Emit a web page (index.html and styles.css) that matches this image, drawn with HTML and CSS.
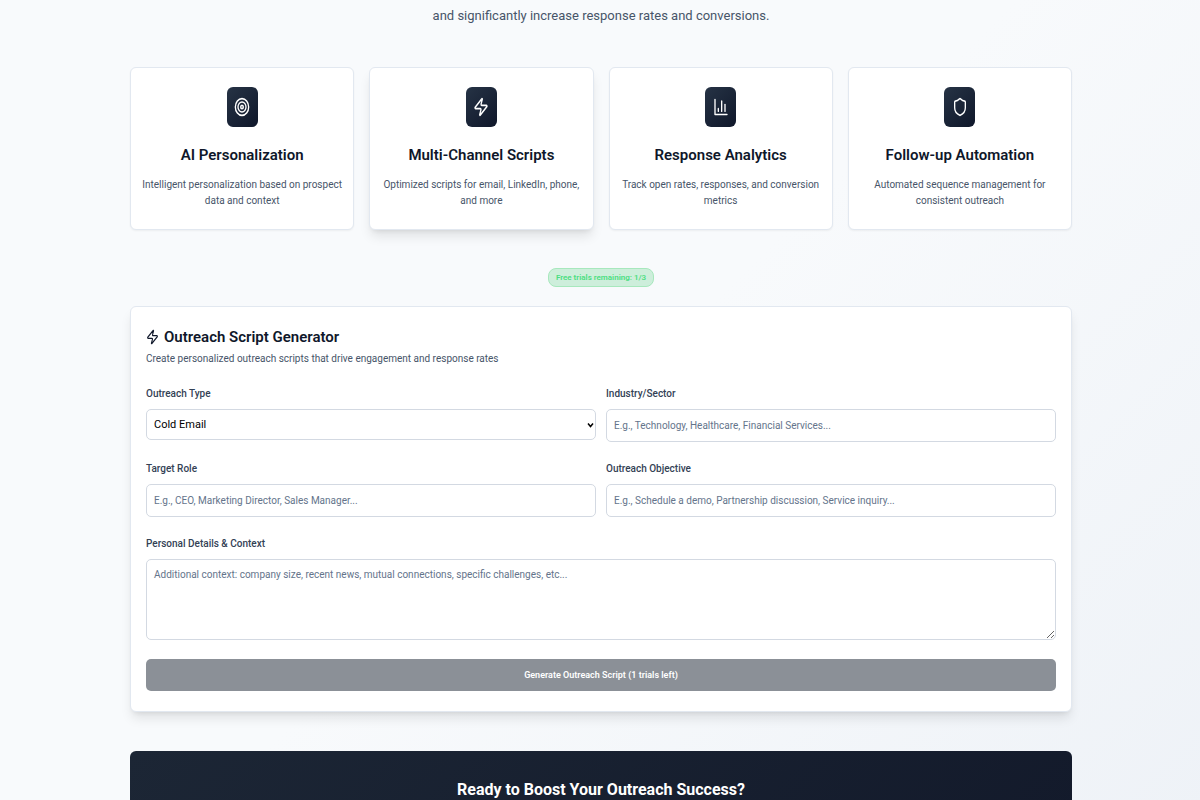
FILE: index.html
```html
<!DOCTYPE html>
<html lang="en">
<head>
    <meta charset="UTF-8">
    <meta name="viewport" content="width=device-width, initial-scale=1.0">
    <title>Outreach Script Generator</title>
    <link rel="stylesheet" href="styles.css">
</head>
<body>
    <main class="container">
        <p class="intro">and significantly increase response rates and conversions.</p>

        <section class="features">
            <article class="card feature">
                <div class="feature-icon">
                    <svg viewBox="0 0 24 24" preserveAspectRatio="none"><circle cx="12" cy="12" r="10"/><circle cx="12" cy="12" r="6"/><circle cx="12" cy="12" r="2"/></svg>
                </div>
                <h3>AI Personalization</h3>
                <p>Intelligent personalization based on prospect data and context</p>
            </article>
            <article class="card feature raised">
                <div class="feature-icon">
                    <svg viewBox="0 0 24 24" preserveAspectRatio="none"><path d="M4 14a1 1 0 0 1-.78-1.63l9.9-10.2a.5.5 0 0 1 .86.46l-1.92 6.02A1 1 0 0 0 13 10h7a1 1 0 0 1 .78 1.63l-9.9 10.2a.5.5 0 0 1-.86-.46l1.92-6.02A1 1 0 0 0 11 14z"/></svg>
                </div>
                <h3>Multi-Channel Scripts</h3>
                <p>Optimized scripts for email, LinkedIn, phone, and more</p>
            </article>
            <article class="card feature">
                <div class="feature-icon">
                    <svg viewBox="0 0 24 24" preserveAspectRatio="none"><path d="M3 3v18h18"/><path d="M18 17V9"/><path d="M13 17V5"/><path d="M8 17v-3"/></svg>
                </div>
                <h3>Response Analytics</h3>
                <p>Track open rates, responses, and conversion metrics</p>
            </article>
            <article class="card feature">
                <div class="feature-icon">
                    <svg viewBox="0 0 24 24" preserveAspectRatio="none"><path d="M20 13c0 5-3.5 7.5-7.66 8.95a1 1 0 0 1-.67-.01C7.5 20.5 4 18 4 13V6a1 1 0 0 1 1-1c2 0 4.5-1.2 6.24-2.72a1.17 1.17 0 0 1 1.52 0C14.51 3.81 17 5 19 5a1 1 0 0 1 1 1z"/></svg>
                </div>
                <h3>Follow-up Automation</h3>
                <p>Automated sequence management for consistent outreach</p>
            </article>
        </section>

        <div class="trials">
            <span class="badge">Free trials remaining: 1/3</span>
        </div>

        <section class="card raised generator">
            <h2>
                <svg viewBox="0 0 24 24" preserveAspectRatio="none"><path d="M4 14a1 1 0 0 1-.78-1.63l9.9-10.2a.5.5 0 0 1 .86.46l-1.92 6.02A1 1 0 0 0 13 10h7a1 1 0 0 1 .78 1.63l-9.9 10.2a.5.5 0 0 1-.86-.46l1.92-6.02A1 1 0 0 0 11 14z"/></svg>
                Outreach Script Generator
            </h2>
            <p class="subtitle">Create personalized outreach scripts that drive engagement and response rates</p>

            <form class="form">
                <div class="field">
                    <label for="outreach-type">Outreach Type</label>
                    <select id="outreach-type">
                        <option selected>Cold Email</option>
                    </select>
                </div>
                <div class="field">
                    <label for="industry">Industry/Sector</label>
                    <input type="text" id="industry" placeholder="E.g., Technology, Healthcare, Financial Services...">
                </div>
                <div class="field">
                    <label for="target-role">Target Role</label>
                    <input type="text" id="target-role" placeholder="E.g., CEO, Marketing Director, Sales Manager...">
                </div>
                <div class="field">
                    <label for="objective">Outreach Objective</label>
                    <input type="text" id="objective" placeholder="E.g., Schedule a demo, Partnership discussion, Service inquiry...">
                </div>
                <div class="field full-width">
                    <label for="context">Personal Details &amp; Context</label>
                    <textarea id="context" placeholder="Additional context: company size, recent news, mutual connections, specific challenges, etc..."></textarea>
                </div>
                <button type="submit" class="full-width" disabled>Generate Outreach Script (1 trials left)</button>
            </form>
        </section>

        <section class="cta">
            <h2>Ready to Boost Your Outreach Success?</h2>
        </section>
    </main>
</body>
</html>
```
FILE: styles.css
```css
* {
    box-sizing: border-box;
}

body {
    margin: 0;
    min-height: 100vh;
    font-family: Roboto, sans-serif;
    font-size: 10px;
    line-height: 16px;
    color: #0f172a;
    background: linear-gradient(135deg, #f8fafc 0%, #f8fafc 50%, #eef2f7 100%);
}

h2,
h3,
p {
    margin: 0;
}

svg {
    fill: none;
    stroke: currentColor;
    stroke-width: 2;
    stroke-linecap: round;
    stroke-linejoin: round;
}

.container {
    max-width: 974px;
    margin: 0 auto;
    padding: 4px 15px 0 17px;
}

.intro {
    font-size: 13px;
    line-height: 24px;
    text-align: center;
    color: #475569;
}

.card {
    background: white;
    border: 1px solid #e2e8f0;
    border-radius: 6px;
    box-shadow: 0 1px 2px rgba(0, 0, 0, 0.05);
}

.card.raised {
    box-shadow: 0 8px 12px -2px rgba(0, 0, 0, 0.1), 0 3px 5px -3px rgba(0, 0, 0, 0.1);
}

.features {
    display: grid;
    grid-template-columns: repeat(4, 1fr);
    gap: 15px;
    margin-top: 39px;
}

.feature {
    padding: 19px 10px 20px;
    text-align: center;
}

.feature-icon {
    display: flex;
    align-items: center;
    justify-content: center;
    width: 31px;
    height: 40px;
    margin: 0 auto 17px;
    border-radius: 6px;
    color: white;
    background: linear-gradient(135deg, #263345, #0f172a);
}

.feature-icon svg {
    width: 16px;
    height: 20px;
}

.feature h3 {
    font-size: 15px;
    line-height: 22px;
    font-weight: 600;
}

.feature p {
    margin-top: 11px;
    color: #475569;
}

.trials {
    display: flex;
    justify-content: center;
    margin: 38px 0 19px;
}

.badge {
    padding: 0 7px;
    border: 1px solid #a7e8bd;
    border-radius: 8px;
    font-size: 8px;
    line-height: 17px;
    font-weight: 600;
    color: #4ade80;
    background: #cdeedb;
}

.generator {
    padding: 19px 15px 20px;
}

.generator h2 {
    display: flex;
    align-items: center;
    gap: 5px;
    font-size: 15px;
    line-height: 22px;
    font-weight: 600;
}

.generator h2 svg {
    width: 13px;
    height: 16px;
}

.subtitle {
    margin-top: 3px;
    color: #475569;
}

.form {
    display: grid;
    grid-template-columns: 1fr 1fr;
    gap: 19px 10px;
    margin-top: 19px;
}

.field {
    display: flex;
    flex-direction: column;
    gap: 7px;
}

.full-width {
    grid-column: 1 / -1;
}

label {
    font-weight: 500;
    color: #334155;
}

input,
select,
textarea {
    width: 100%;
    height: 33px;
    padding: 0 7px;
    border: 1px solid #d3d9e2;
    border-radius: 5px;
    font-family: inherit;
    font-size: 10px;
    line-height: 16px;
    color: #0f172a;
    background: white;
}

select {
    height: 31px;
    font-size: 11px;
    color: black;
    appearance: none;
    background: white url("data:image/svg+xml,%3Csvg xmlns='http://www.w3.org/2000/svg' width='7' height='6' viewBox='0 0 7 6'%3E%3Cpath d='M1 1.5l2.5 3 2.5-3' fill='none' stroke='black' stroke-width='1.5'/%3E%3C/svg%3E") no-repeat right 1px center;
}

textarea {
    height: 81px;
    padding: 7px;
    resize: vertical;
}

::placeholder {
    color: #64748b;
}

button {
    height: 32px;
    border: none;
    border-radius: 5px;
    font-family: inherit;
    font-size: 9px;
    font-weight: 600;
    color: white;
    background: #8b9097;
}

.cta {
    margin-top: 39px;
    padding: 28px 15px;
    border-radius: 6px;
    text-align: center;
    color: white;
    background: linear-gradient(135deg, #1c2635, #131a2b);
}

.cta h2 {
    font-size: 16px;
    line-height: 22px;
}
```
